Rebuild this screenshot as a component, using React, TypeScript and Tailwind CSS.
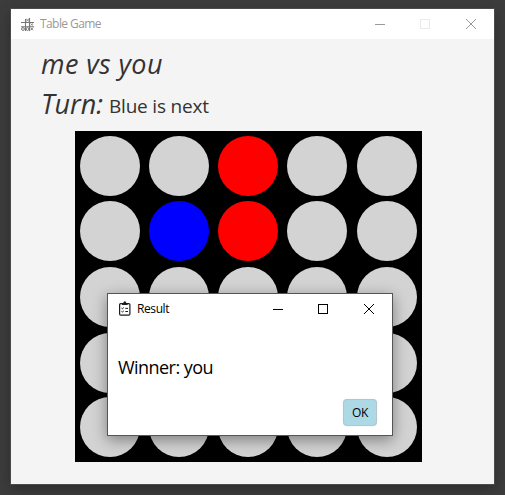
import React from "react";

type Cell = "empty" | "red" | "blue";

const board: Cell[][] = [
  ["empty", "empty", "red", "empty", "empty"],
  ["empty", "blue", "red", "empty", "empty"],
  ["empty", "empty", "empty", "empty", "empty"],
  ["empty", "empty", "empty", "empty", "empty"],
  ["empty", "empty", "empty", "empty", "empty"],
];

const fills: Record<Cell, string> = {
  empty: "bg-[#d3d3d3]",
  red: "bg-[#ff0000]",
  blue: "bg-[#0000ff]",
};

function Controls({ faded = false }: { faded?: boolean }) {
  const main = faded ? "#999999" : "#000000";
  const box = faded ? "#e9e9e9" : "#000000";
  return (
    <div className="flex gap-[35px]">
      <svg width="10" height="10" viewBox="0 0 10 10" shapeRendering="crispEdges">
        <path d="M0 5.5H10" stroke={main} fill="none" />
      </svg>
      <svg width="10" height="10" viewBox="0 0 10 10" shapeRendering="crispEdges">
        <rect x=".5" y=".5" width="9" height="9" stroke={box} fill="none" />
      </svg>
      <svg className="ml-px" width="10" height="10" viewBox="0 0 10 10">
        <path d="M0 0L10 10M10 0L0 10" stroke={main} strokeWidth="1" fill="none" />
      </svg>
    </div>
  );
}

function GridIcon() {
  return (
    <svg width="13" height="13" viewBox="0 0 13 13" fill="none" stroke="#777">
      <path d="M4.5 1V13M8.5 0V13M0 4.5H13M0 8.7H13" strokeWidth="1.1" />
      <path d="M5 .8L8 3.5M8 .8L5 3.5M9.5 5.5L12 7.5M12 5.5L9.5 7.5" strokeWidth=".8" />
      <circle cx="2" cy="11" r="1.4" />
      <circle cx="6.5" cy="11" r="1.4" />
      <path d="M9.5 9.7L12 12.3M12 9.7L9.5 12.3" />
    </svg>
  );
}

function ClipboardIcon() {
  return (
    <svg width="12" height="15" viewBox="0 0 12 15" fill="none" stroke="#1c1c1c">
      <rect x=".6" y="2.6" width="10.3" height="11.6" rx="1.2" strokeWidth="1.2" />
      <path d="M3 4V2H4.3Q4.5.3 5.8.3T7.3 2H8.6V4Z" fill="#1c1c1c" stroke="none" />
      <path d="M2.5 7.1L3.3 7.7L4.8 6.6M2.5 10.4L3.3 11L4.8 9.9M6.3 7.4H9M6.3 10.5H9" strokeWidth="1" />
    </svg>
  );
}

function ResultDialog() {
  return (
    <div className="absolute left-[96px] top-[284px] flex h-[143px] w-[286px] flex-col border border-[#555] bg-white text-black shadow-[0_4px_14px_rgba(0,0,0,0.4)]">
      <div className="flex h-[29px] items-center pl-[11px] pr-[18px]">
        <ClipboardIcon />
        <span className="ml-[6px] flex-1 text-[12px] leading-4 tracking-[-0.4px]">Result</span>
        <Controls />
      </div>
      <p className="mt-[32px] pl-[10px] text-[18px] leading-6 tracking-[-0.55px]">Winner: you</p>
      <div className="mt-[20px] flex pl-[235px]">
        <button className="h-[27px] w-[34px] rounded-[4px] border border-[#b4c5cb] bg-[#add8e6] text-[12px] leading-none tracking-[-0.4px] shadow-[0_0_1px_#add8e6]">
          OK
        </button>
      </div>
    </div>
  );
}

export default function App() {
  return (
    <div className="h-[495px] w-[505px] overflow-hidden bg-[#3c3c3c] pl-[11px] pt-[9px] font-['Open_Sans','Noto_Sans',sans-serif]">
      <main className="relative h-[475px] w-[483px] bg-[#f4f4f4] shadow-[0_0_0_1px_#4b4b4b,0_4px_12px_rgba(0,0,0,0.3)]">
        <header className="flex h-[30px] items-center bg-white pl-[10px] pr-[18px]">
          <GridIcon />
          <span className="ml-[6px] flex-1 text-[12px] leading-4 tracking-[-0.58px] text-[#999]">Table Game</span>
          <Controls faded />
        </header>
        <h1 className="h-[40px] pl-[30px] pt-[5px] text-[27px] italic leading-[40px] tracking-[0.4px] text-[#333]">
          me vs you
        </h1>
        <div className="flex h-[40px] items-baseline pl-[30px] pt-[5px] leading-[40px] text-[#333]">
          <span className="w-[68px] text-[27px] italic">Turn:</span>
          <span className="relative -top-px text-[19px] tracking-[-0.2px]">Blue is next</span>
        </div>
        <div className="ml-[64px] mt-[12px] grid h-[331px] w-[347px] grid-cols-[69px_69px_69px_70px_60px] grid-rows-[65px_66px_66px_64px_60px] bg-black pl-[5px] pt-[5px]">
          {board.flat().map((cell, i) => (
            <div key={i} className={`size-[60px] rounded-full ${fills[cell]}`} />
          ))}
        </div>
        <ResultDialog />
      </main>
    </div>
  );
}
